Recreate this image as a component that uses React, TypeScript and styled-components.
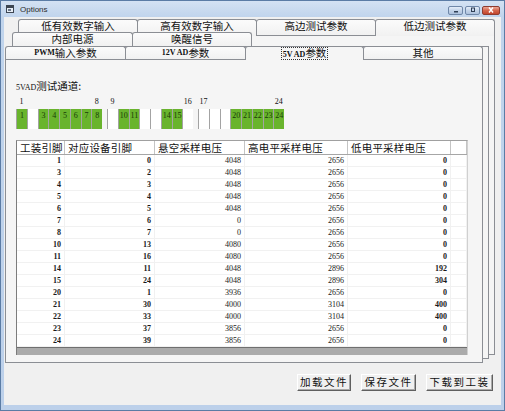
import React from 'react'
import styled, { createGlobalStyle } from 'styled-components'

const ACTIVE = [1, 3, 4, 5, 6, 7, 8, 10, 11, 14, 15, 20, 21, 22, 23, 24]

const ROWS = [
  [1, 0, 4048, 2656, 0],
  [3, 2, 4048, 2656, 0],
  [4, 3, 4048, 2656, 0],
  [5, 4, 4048, 2656, 0],
  [6, 5, 4048, 2656, 0],
  [7, 6, 0, 2656, 0],
  [8, 7, 0, 2656, 0],
  [10, 13, 4080, 2656, 0],
  [11, 16, 4080, 2656, 0],
  [14, 11, 4048, 2896, 192],
  [15, 24, 4048, 2896, 304],
  [20, 1, 3936, 2656, 0],
  [21, 30, 4000, 3104, 400],
  [22, 33, 4000, 3104, 400],
  [23, 37, 3856, 2656, 0],
  [24, 39, 3856, 2656, 0],
]

const HEADERS = ['工装引脚', '对应设备引脚', '悬空采样电压', '高电平采样电压', '低电平采样电压', '']

const GlobalStyle = createGlobalStyle`
  * { box-sizing: border-box; }
  html, body { margin: 0; padding: 0; background: #f0f0f0; }
  body { font-family: "Noto Sans CJK SC", "Liberation Sans", sans-serif; }
`

const Window = styled.div`
  width: 505px;
  height: 411px;
  display: flex;
  flex-direction: column;
  background: linear-gradient(180deg, #d4e2f3 0px, #c0d4ec 16px, #bcd0ea 100%);
  border: 1px solid #5b7ca5;
  overflow: hidden;
`

const TitleBar = styled.div`
  height: 16px;
  flex: none;
  display: flex;
  align-items: center;
  gap: 6px;
  padding: 0 4px 0 5px;
`

const TitleText = styled.span`
  font-family: "Liberation Sans", sans-serif;
  font-size: 8px;
  color: #2b2b2b;
`

const CaptionGroup = styled.div`
  margin-left: auto;
  display: flex;
  gap: 2px;
  margin-top: 2px;
`

const CaptionButton = styled.div<{ $close?: boolean }>`
  width: ${p => (p.$close ? 18 : 15)}px;
  height: 9px;
  border: 1px solid ${p => (p.$close ? '#8d3c30' : '#6f87a8')};
  border-radius: 2px;
  background: ${p =>
    p.$close
      ? 'linear-gradient(180deg, #eba796 0%, #d4654c 50%, #c2452c 100%)'
      : 'linear-gradient(180deg, #e4edf8 0%, #c3d3e8 50%, #aec2de 100%)'};
  display: flex;
  align-items: center;
  justify-content: center;
`

const Client = styled.div`
  flex: 1;
  margin: 0 3px 5px 3px;
  padding-top: 1px;
  background: #f0f0f0;
  display: flex;
  flex-direction: column;
`

const Sheet = styled.div<{ $m: string }>`
  display: flex;
  flex-direction: column;
  margin: ${p => p.$m};
`

const TabRow = styled.div<{ $h: number }>`
  display: flex;
  flex: none;
  height: ${p => p.$h}px;
`

const Tab = styled.div<{ $w: number; $bottom?: boolean; $active?: boolean; $lift?: number }>`
  flex: 0 0 ${p => p.$w}px;
  margin-right: -1px;
  display: flex;
  align-items: center;
  justify-content: center;
  border: 1px solid #8b8e94;
  border-bottom: ${p => (p.$bottom ? '1px solid #8b8e94' : 'none')};
  border-radius: 3px 3px 0 0;
  background: ${p => (p.$active ? '#f5f5f5' : 'linear-gradient(180deg, #fbfbfb, #f1f1f1)')};
  font-size: 10.5px;
  line-height: 1;
  color: #111;
  position: relative;
  z-index: ${p => (p.$active ? 2 : 0)};
  margin-bottom: ${p => (p.$active ? -1 : 0)}px;
  padding-bottom: ${p => (p.$active ? 1 : p.$lift ?? 0)}px;
`

const Latin = styled.b`
  font-family: "Liberation Serif", serif;
  font-size: 8px;
  font-weight: 700;
`

const Focus = styled.span`
  border: 1px dotted #333;
  padding: 0 1px;
  line-height: 9px;
`

const Body = styled.div<{ $front?: boolean }>`
  display: flex;
  flex-direction: column;
  background: #f5f5f5;
  border-right: 1px solid #8b8e94;
  border-bottom: 1px solid #8b8e94;
  border-top: ${p => (p.$front ? '1px solid #8b8e94' : '0')};
  border-left: ${p => (p.$front ? '1px solid #8b8e94' : '0')};
  padding: ${p => (p.$front ? '20px 0 7px 10px' : '0')};
`

const MiddleBody = styled(Body)`
  border-top: 1px solid #8b8e94;
`

const ChannelLabel = styled.div`
  height: 12px;
  font-size: 10.5px;
  line-height: 12px;
  color: #111;
`

const SerifSmall = styled.span`
  font-family: "Liberation Serif", serif;
  font-size: 8px;
`

const Channels = styled.div`
  display: flex;
  gap: 5px;
  margin-top: 5px;
`

const Group = styled.div`
  width: 86px;
  display: grid;
  grid-template-columns: repeat(8, 1fr);
  grid-template-rows: 9px 20px;
  row-gap: 3px;
`

const PinLabel = styled.div<{ $col: number }>`
  grid-column: ${p => p.$col};
  grid-row: 1;
  font-family: "Liberation Serif", serif;
  font-size: 8px;
  line-height: 9px;
  text-align: center;
  white-space: nowrap;
  color: #111;
`

const Cell = styled.div<{ $on: boolean }>`
  grid-row: 2;
  background: ${p => (p.$on ? '#69b42d' : '#ffffff')};
  border-left: 1px solid #a3a3a3;
  font-family: "Liberation Serif", serif;
  font-size: 8px;
  line-height: 8px;
  padding-top: 3px;
  text-align: center;
  color: #173a06;
`

const Table = styled.div`
  width: 452px;
  margin-top: 11px;
  background: #fff;
  border-top: 1px solid #a0a0a0;
  border-left: 1px solid #7c7c7c;
  border-right: 1px solid #d0d0d0;
  display: flex;
  flex-direction: column;
`

const GridRow = styled.div<{ $head?: boolean }>`
  display: grid;
  grid-template-columns: 48px 90px 90px 103px 103px 1fr;
  height: ${p => (p.$head ? 14 : 12)}px;
  border-bottom: 1px solid ${p => (p.$head ? '#a6a6a6' : '#f1f1f1')};
`

const HeadCell = styled.div`
  border-right: 1px solid #c4c4c4;
  font-size: 10.5px;
  line-height: 13px;
  padding-left: 3px;
  letter-spacing: 0.2px;
  color: #111;
  white-space: nowrap;
  overflow: hidden;
`

const DataCell = styled.div<{ $bold?: boolean }>`
  border-right: 1px solid #f1f1f1;
  font-family: "Liberation Serif", serif;
  font-size: 8px;
  font-weight: ${p => (p.$bold ? 700 : 400)};
  line-height: 11px;
  text-align: right;
  padding-right: 3px;
  color: #1a1a1a;
`

const ScrollBand = styled.div`
  height: 8px;
  background: #ababab;
  border-top: 1px solid #6f6f6f;
`

const ButtonBar = styled.div`
  display: flex;
  justify-content: flex-end;
  gap: 10px;
  margin-top: 19px;
  padding-right: 8px;
`

const Button = styled.button<{ $w: number }>`
  width: ${p => p.$w}px;
  height: 17px;
  padding: 0;
  background: #f0f0f0;
  border: 1px solid;
  border-color: #ffffff #5f5f5f #5f5f5f #ffffff;
  box-shadow: inset -1px -1px 0 #a9a9a9;
  font-family: "Noto Sans CJK SC", sans-serif;
  font-size: 10.5px;
  letter-spacing: 1.5px;
  line-height: 1;
  color: #111;
`

const AppIcon = () => (
  <svg width="8" height="8" viewBox="0 0 8 8">
    <rect x="0.5" y="0.5" width="7" height="7" fill="#e8eef6" stroke="#3d4652" />
    <rect x="1" y="1" width="6" height="2" fill="#3d4652" />
    <rect x="2" y="4" width="3" height="2" fill="#6c7a8c" />
  </svg>
)

const Glyph = ({ kind }: { kind: 'min' | 'max' | 'close' }) => (
  <svg width="8" height="6" viewBox="0 0 8 6">
    {kind === 'min' && <rect x="2" y="4" width="4" height="1.5" fill="#2f3e55" />}
    {kind === 'max' && <rect x="2.5" y="1" width="3" height="3.5" fill="none" stroke="#2f3e55" />}
    {kind === 'close' && <path d="M2 0.5 L6 5.5 M6 0.5 L2 5.5" stroke="#fff" strokeWidth="1.4" />}
  </svg>
)

const ChannelGroup = ({ start }: { start: number }) => (
  <Group>
    <PinLabel $col={1}>{start}</PinLabel>
    <PinLabel $col={8}>{start + 7}</PinLabel>
    {Array.from({ length: 8 }, (_, i) => {
      const n = start + i
      const on = ACTIVE.includes(n)
      return (
        <Cell key={n} $on={on}>
          {on ? n : ''}
        </Cell>
      )
    })}
  </Group>
)

const App = () => {
  return (
    <>
      <GlobalStyle />
      <Window>
        <TitleBar>
          <AppIcon />
          <TitleText>Options</TitleText>
          <CaptionGroup>
            <CaptionButton><Glyph kind="min" /></CaptionButton>
            <CaptionButton><Glyph kind="max" /></CaptionButton>
            <CaptionButton $close><Glyph kind="close" /></CaptionButton>
          </CaptionGroup>
        </TitleBar>

        <Client>
          <Sheet $m="1px 6px 0 14px">
            <TabRow $h={17}>
              <Tab $w={120} $lift={3}>低有效数字输入</Tab>
              <Tab $w={120} $lift={3}>高有效数字输入</Tab>
              <Tab $w={120} $lift={3} $bottom>高边测试参数</Tab>
              <Tab $w={120} $lift={3}>低边测试参数</Tab>
            </TabRow>
            <Body>
              <Sheet $m="-4px 5px -5px -6px">
                <TabRow $h={14}>
                  <Tab $w={121}>内部电源</Tab>
                  <Tab $w={120}>唤醒信号</Tab>
                </TabRow>
                <MiddleBody>
                  <Sheet $m="-1px 5px -5px -7px">
                    <TabRow $h={13}>
                      <Tab $w={121}><Latin>PWM</Latin>输入参数</Tab>
                      <Tab $w={121}><Latin>12V AD</Latin>参数</Tab>
                      <Tab $w={119} $active>
                        <Focus><Latin>5V AD</Latin>参数</Focus>
                      </Tab>
                      <Tab $w={120}>其他</Tab>
                    </TabRow>
                    <Body $front>
                      <ChannelLabel>
                        <SerifSmall>5VAD</SerifSmall>测试通道:
                      </ChannelLabel>
                      <Channels>
                        <ChannelGroup start={1} />
                        <ChannelGroup start={9} />
                        <ChannelGroup start={17} />
                      </Channels>
                      <Table>
                        <GridRow $head>
                          {HEADERS.map((h, i) => (
                            <HeadCell key={i}>{h}</HeadCell>
                          ))}
                        </GridRow>
                        {ROWS.map(r => (
                          <GridRow key={r[0]}>
                            <DataCell $bold>{r[0]}</DataCell>
                            <DataCell $bold>{r[1]}</DataCell>
                            <DataCell>{r[2]}</DataCell>
                            <DataCell>{r[3]}</DataCell>
                            <DataCell $bold>{r[4]}</DataCell>
                            <DataCell />
                          </GridRow>
                        ))}
                        <ScrollBand />
                      </Table>
                    </Body>
                  </Sheet>
                </MiddleBody>
              </Sheet>
            </Body>
          </Sheet>

          <ButtonBar>
            <Button $w={54}>加载文件</Button>
            <Button $w={55}>保存文件</Button>
            <Button $w={67}>下载到工装</Button>
          </ButtonBar>
        </Client>
      </Window>
    </>
  )
}

export default App
